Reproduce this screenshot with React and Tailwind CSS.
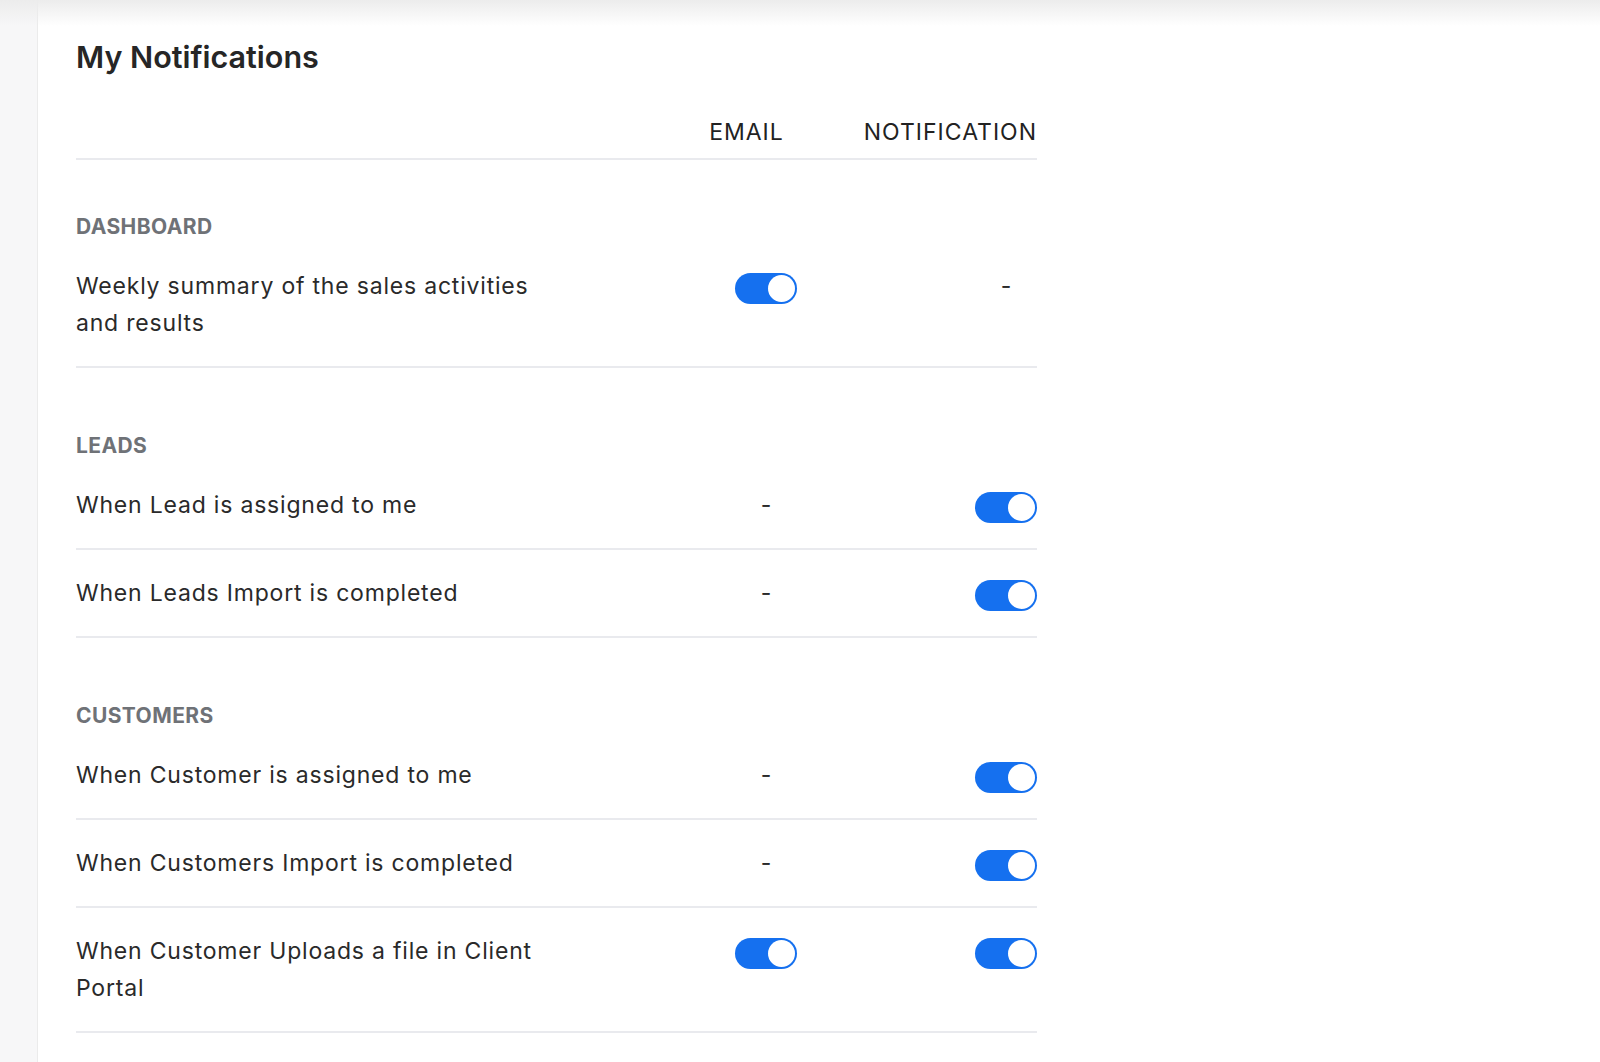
import React, { useState } from 'react';

const sections = [
  {
    title: 'Dashboard',
    items: [
      { id: 'weekly', label: 'Weekly summary of the sales activities and results', email: true, notification: null },
    ],
  },
  {
    title: 'Leads',
    items: [
      { id: 'lead-assigned', label: 'When Lead is assigned to me', email: null, notification: true },
      { id: 'lead-import', label: 'When Leads Import is completed', email: null, notification: true },
    ],
  },
  {
    title: 'Customers',
    items: [
      { id: 'cust-assigned', label: 'When Customer is assigned to me', email: null, notification: true },
      { id: 'cust-import', label: 'When Customers Import is completed', email: null, notification: true },
      { id: 'cust-upload', label: 'When Customer Uploads a file in Client Portal', email: true, notification: true },
    ],
  },
];

const Toggle = ({ checked, onChange }) => (
  <button
    onClick={onChange}
    className={`mt-[4px] flex h-[31px] w-[62px] items-center rounded-full p-[2px] ${
      checked ? 'justify-end bg-[#1570ef]' : 'justify-start bg-[#d1d5db]'
    }`}
  >
    <span className="block h-[27px] w-[27px] rounded-full bg-white" />
  </button>
);

const Cell = ({ value, onToggle }) => (
  <div className="flex h-[37px] w-[62px] items-center justify-center">
    {value === null ? (
      <span className="text-[23px] text-[#2a2a2a]">-</span>
    ) : (
      <Toggle checked={value} onChange={onToggle} />
    )}
  </div>
);

export default function App() {
  const [settings, setSettings] = useState(sections);

  const toggle = (id, key) => {
    setSettings(settings.map(s => ({
      ...s,
      items: s.items.map(i => (i.id === id ? { ...i, [key]: !i[key] } : i)),
    })));
  };

  return (
    <div className="relative flex min-h-screen bg-white font-['Inter',sans-serif] text-[#2a2a2a]">
      {/* top bar shadow */}
      <div className="pointer-events-none absolute inset-x-0 top-0 h-[26px] bg-linear-to-b from-[#ececec] to-transparent" />

      <aside className="w-[38px] shrink-0 border-r border-[#ebebeb] bg-[#f7f7f8]" />

      <main className="flex-1 pl-[38px] pt-[39px]">
        <div className="w-[961px]">
          <h1 className="text-[30.5px] font-semibold leading-[36px] text-[#262626]">My Notifications</h1>

          <div className="mt-[42px] flex justify-end gap-[80px] border-b-2 border-[#e9eaee] pb-[11px] text-[23px] leading-[30px] tracking-[1px] text-[#222]">
            <span>EMAIL</span>
            <span>NOTIFICATION</span>
          </div>

          {settings.map((section, idx) => (
            <div key={section.title} className={idx === 0 ? 'pt-[55px]' : 'pt-[66px]'}>
              <h2 className="mb-[4px] text-[21px] font-bold uppercase leading-[24px] tracking-[0.4px] text-[#6f7277]">
                {section.title}
              </h2>
              {section.items.map(item => (
                <div
                  key={item.id}
                  className="grid grid-cols-[1fr_62px_62px] gap-x-[178px] border-b-2 border-[#e9eaee] py-[24.5px]"
                >
                  <div className="max-w-[470px] text-[23px] leading-[37px] tracking-[0.8px]">{item.label}</div>
                  <Cell value={item.email} onToggle={() => toggle(item.id, 'email')} />
                  <Cell value={item.notification} onToggle={() => toggle(item.id, 'notification')} />
                </div>
              ))}
            </div>
          ))}
        </div>
      </main>
    </div>
  );
}
